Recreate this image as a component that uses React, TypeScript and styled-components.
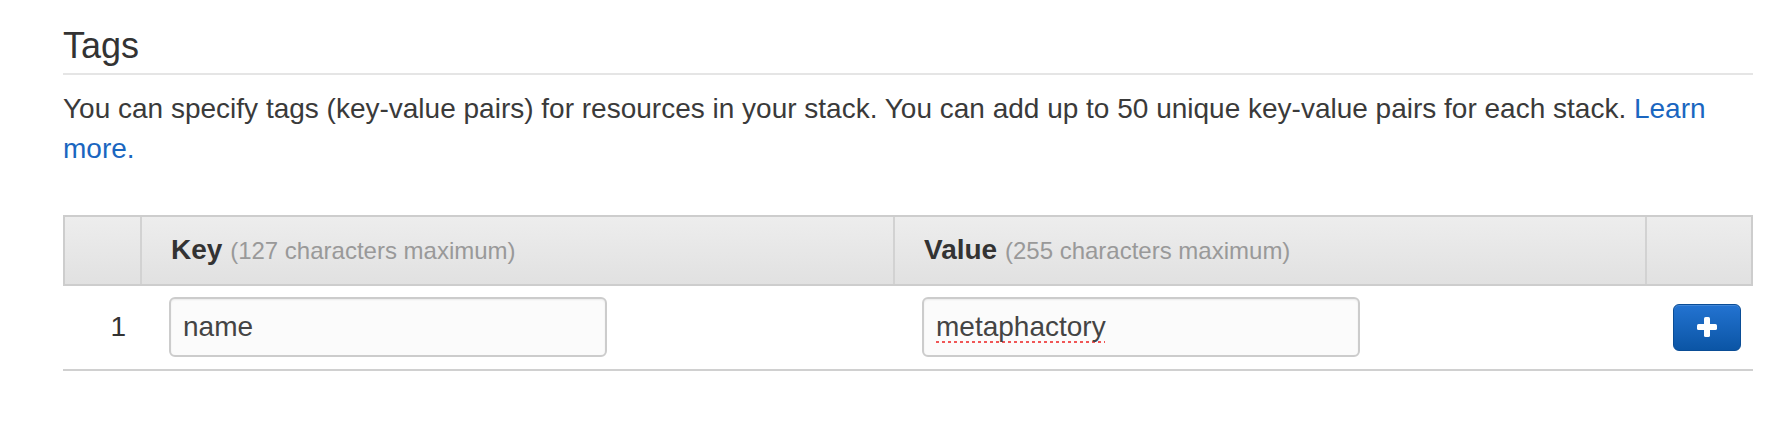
import React from "react";
import styled, { createGlobalStyle } from "styled-components";

const GlobalStyle = createGlobalStyle`
  html, body {
    margin: 0;
    padding: 0;
    background: #ffffff;
  }
  body {
    font-family: "Liberation Sans", Arial, Helvetica, sans-serif;
    color: #333333;
  }
  * { box-sizing: border-box; }
`;

const Page = styled.div`
  padding: 26px 0 0 63px;
  width: 1753px;
`;

const Heading = styled.h2`
  margin: 0;
  font-size: 36px;
  line-height: 40px;
  font-weight: 400;
  color: #333333;
  padding-bottom: 7px;
  border-bottom: 2px solid #e5e5e5;
`;

const Description = styled.p`
  margin: 14px 0 0 0;
  font-size: 28px;
  line-height: 40px;
  color: #3a3a3a;
`;

const Link = styled.a`
  color: #1a66c0;
  text-decoration: none;
`;

const Table = styled.div`
  margin-top: 46px;
  width: 1690px;
`;

const columns = "75px 753px 752px 106px";

const HeaderRow = styled.div`
  display: grid;
  grid-template-columns: ${columns};
  border: 2px solid #cdcdcd;
  background: linear-gradient(to bottom, #ededed, #e1e1e1);
`;

const HeaderCell = styled.div<{ $first?: boolean }>`
  padding: 13px 29px;
  font-size: 28px;
  line-height: 40px;
  border-left: ${(p) => (p.$first ? "none" : "2px solid #d2d2d2")};
  white-space: nowrap;
`;

const Label = styled.strong`
  font-weight: 700;
  color: #333333;
`;

const Hint = styled.span`
  font-size: 24px;
  color: #999999;
  font-weight: 400;
`;

const BodyRow = styled.div`
  display: grid;
  grid-template-columns: ${columns};
  border-bottom: 2px solid #d0d0d0;
  padding: 0 2px;
`;

const Cell = styled.div<{ $align?: "start" | "end" }>`
  display: flex;
  align-items: center;
  justify-content: ${(p) => (p.$align === "end" ? "flex-end" : "flex-start")};
  padding: 11px ${(p) => (p.$align === "end" ? "14px" : "29px")} 12px
    ${(p) => (p.$align === "end" ? "0" : "29px")};
  font-size: 28px;
  line-height: 40px;
  color: #333333;
`;

const ButtonCell = styled(Cell)`
  padding-left: 28px;
  padding-right: 8px;
`;

const TextField = styled.input<{ $misspelled?: boolean }>`
  width: 438px;
  flex: 0 0 auto;
  height: 60px;
  border: 2px solid #cccccc;
  border-radius: 6px;
  background: #fbfbfb;
  box-shadow: inset 0 1px 2px rgba(0, 0, 0, 0.07);
  padding: 0 12px;
  font-family: "Liberation Sans", Arial, Helvetica, sans-serif;
  font-size: 28px;
  color: #444444;
  outline: none;
  text-decoration: ${(p) => (p.$misspelled ? "underline dotted #f05656" : "none")};
  text-decoration-thickness: 3px;
  text-underline-offset: 5px;
  text-decoration-skip-ink: none;
`;

const AddButton = styled.button`
  flex: 0 0 auto;
  width: 68px;
  height: 47px;
  display: flex;
  align-items: center;
  justify-content: center;
  padding: 0;
  border: 1px solid #0a4d96;
  border-radius: 6px;
  background: linear-gradient(to bottom, #2373d1, #0b55a5);
  box-shadow: inset 0 1px 0 rgba(255, 255, 255, 0.15);
  cursor: pointer;
`;

const PlusIcon = () => (
  <svg width="20" height="20" viewBox="0 0 20 20" aria-hidden="true">
    <rect x="7" y="0" width="6" height="20" rx="1.6" fill="#ffffff" />
    <rect x="0" y="7" width="20" height="6" rx="1.6" fill="#ffffff" />
  </svg>
);

const rows = [{ key: "name", value: "metaphactory" }];

export default function App() {
  return (
    <>
      <GlobalStyle />
      <Page>
        <Heading>Tags</Heading>
        <Description>
          You can specify tags (key-value pairs) for resources in your stack. You can add up to 50
          unique key-value pairs for each stack. <Link href="#">Learn more.</Link>
        </Description>
        <Table>
          <HeaderRow>
            <HeaderCell $first />
            <HeaderCell>
              <Label>Key</Label> <Hint>(127 characters maximum)</Hint>
            </HeaderCell>
            <HeaderCell>
              <Label>Value</Label> <Hint>(255 characters maximum)</Hint>
            </HeaderCell>
            <HeaderCell />
          </HeaderRow>
          {rows.map((r, i) => (
            <BodyRow key={i}>
              <Cell $align="end">{i + 1}</Cell>
              <Cell>
                <TextField defaultValue={r.key} spellCheck={false} />
              </Cell>
              <Cell>
                <TextField defaultValue={r.value} spellCheck={false} $misspelled />
              </Cell>
              <ButtonCell>
                <AddButton type="button" aria-label="Add tag">
                  <PlusIcon />
                </AddButton>
              </ButtonCell>
            </BodyRow>
          ))}
        </Table>
      </Page>
    </>
  );
}
